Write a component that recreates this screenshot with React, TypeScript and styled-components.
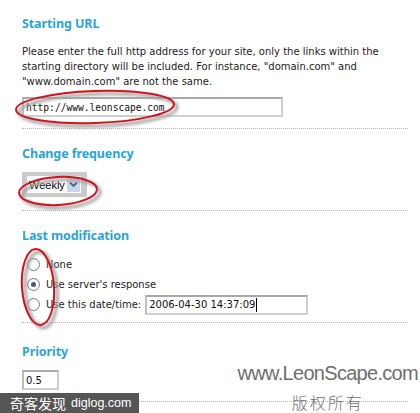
import styled, { createGlobalStyle } from "styled-components";

const Global = createGlobalStyle`
  html, body {
    margin: 0;
    padding: 0;
    background: #fff;
  }
  body {
    font-family: "DejaVu Sans", Verdana, sans-serif;
    color: #222;
  }
`;

const Page = styled.div`
  position: relative;
  width: 420px;
  height: 413px;
  overflow: hidden;
  padding-left: 22px;
  box-sizing: border-box;
`;

const Section = styled.div<{ $top: number; $bottom: number }>`
  width: 386px;
  padding-top: ${(p) => p.$top}px;
  padding-bottom: ${(p) => p.$bottom}px;
  border-bottom: 1px dotted #b5b5b5;
`;

const Heading = styled.div`
  font-family: "Noto Sans", Tahoma, sans-serif;
  font-weight: 700;
  font-size: 12.5px;
  line-height: 20px;
  color: #2ba4d6;
  letter-spacing: -0.1px;
`;

const Para = styled.p`
  margin: 10px 0 0;
  font-size: 10px;
  line-height: 15px;
`;

const TextBox = styled.div<{ $w: number; $mono?: boolean }>`
  width: ${(p) => p.$w}px;
  height: 20px;
  box-sizing: border-box;
  border: 2px solid #cfcfcf;
  border-top-color: #a9a9a9;
  border-left-color: #bdbdbd;
  padding: 0 2px;
  display: flex;
  align-items: center;
  font-family: ${(p) =>
    p.$mono ? `"DejaVu Sans Mono", monospace` : `"DejaVu Sans", sans-serif`};
  font-size: ${(p) => (p.$mono ? 9.6 : 10)}px;
  color: #111;
  background: #fff;
`;

const Caret = styled.span`
  display: inline-block;
  width: 1px;
  height: 14px;
  background: #000;
  margin-left: 1px;
`;

const SelectWrap = styled.div`
  margin-top: 8px;
  width: 65px;
  height: 25px;
  box-sizing: border-box;
  background: #cbcbcb;
  padding: 4px 6px 4px 5px;
  display: flex;
  align-items: stretch;
`;

const SelectBox = styled.div`
  flex: 1;
  background: #fff;
  display: flex;
  align-items: center;
  justify-content: space-between;
  padding: 1px 1px 1px 2px;
  font-family: "Liberation Sans", Arial, sans-serif;
  font-size: 11px;
  color: #000;
`;

const ArrowBtn = styled.div`
  width: 13px;
  height: 15px;
  background: #c9d5ec;
  display: flex;
  align-items: center;
  justify-content: center;
`;

const RadioList = styled.div`
  margin-top: 8px;
  padding-left: 5px;
  display: flex;
  flex-direction: column;
`;

const RadioRow = styled.div<{ $h: number }>`
  height: ${(p) => p.$h}px;
  display: flex;
  align-items: center;
  gap: 6px;
  font-size: 10px;
`;

const Radio = styled.span<{ $on?: boolean }>`
  width: 11px;
  height: 11px;
  border-radius: 50%;
  border: 1px solid #6f7f95;
  background: radial-gradient(circle at 60% 60%, #fff 40%, #e2e2e2 100%);
  display: flex;
  align-items: center;
  justify-content: center;
  &::after {
    content: "";
    width: 5px;
    height: 5px;
    border-radius: 50%;
    background: ${(p) => (p.$on ? "#4a5a6e" : "transparent")};
  }
`;

const Label = styled.span`
  display: flex;
  align-items: center;
  gap: 4px;
`;

const Field = styled.div`
  margin-top: 8px;
`;

const Overlay = styled.svg`
  position: absolute;
  left: 0;
  top: 0;
  pointer-events: none;
`;

const Stamp = styled.div`
  position: absolute;
  left: 0;
  bottom: 0;
  width: 139px;
  height: 20px;
  background: #555;
  color: #fff;
  font-family: "Noto Sans CJK SC", sans-serif;
  font-size: 14px;
  display: flex;
  align-items: center;
  gap: 5px;
  padding-left: 10px;
  box-sizing: border-box;
`;

const StampLatin = styled.span`
  font-family: "Liberation Sans", Arial, sans-serif;
  font-size: 12.5px;
`;

const Mark = styled.div`
  position: absolute;
  right: 2px;
  top: 361px;
  display: flex;
  flex-direction: column;
  align-items: center;
  color: #6e6e6e;
`;

const MarkSite = styled.div`
  font-family: "Liberation Sans", Arial, sans-serif;
  font-size: 20px;
  line-height: 24px;
  letter-spacing: -0.7px;
`;

const MarkCopy = styled.div`
  font-family: "Noto Sans CJK SC", sans-serif;
  font-weight: 300;
  font-size: 16px;
  line-height: 22px;
  letter-spacing: 2px;
  margin-top: 6px;
`;

const rings = [
  { cx: 95, cy: 107, rx: 79, ry: 16, rot: -2 },
  { cx: 58, cy: 191, rx: 39, ry: 14, rot: -3 },
  { cx: 38, cy: 287, rx: 16, ry: 38, rot: -4 },
];

export default function App() {
  return (
    <>
      <Global />
      <Page>
        <Section $top={14} $bottom={11}>
          <Heading>Starting URL</Heading>
          <Para>
            Please enter the full http address for your site, only the links within the
            <br />
            starting directory will be included. For instance, "domain.com" and
            <br />
            "www.domain.com" are not the same.
          </Para>
          <Field>
            <TextBox $w={261} $mono>
              http://www.leonscape.com
            </TextBox>
          </Field>
        </Section>

        <Section $top={15} $bottom={13}>
          <Heading>Change frequency</Heading>
          <SelectWrap>
            <SelectBox>
              Weekly
              <ArrowBtn>
                <svg width="9" height="7" viewBox="0 0 9 7">
                  <path d="M1 1.5 L4.5 5 L8 1.5" fill="none" stroke="#4d6185" strokeWidth="1.8" />
                </svg>
              </ArrowBtn>
            </SelectBox>
          </SelectWrap>
        </Section>

        <Section $top={15} $bottom={7}>
          <Heading>Last modification</Heading>
          <RadioList>
            <RadioRow $h={20}>
              <Radio />
              <Label>None</Label>
            </RadioRow>
            <RadioRow $h={20}>
              <Radio $on />
              <Label>Use server's response</Label>
            </RadioRow>
            <RadioRow $h={21}>
              <Radio />
              <Label>
                Use this date/time:
                <TextBox $w={163}>
                  2006-04-30 14:37:09
                  <Caret />
                </TextBox>
              </Label>
            </RadioRow>
          </RadioList>
        </Section>

        <Section $top={19} $bottom={11}>
          <Heading>Priority</Heading>
          <Field>
            <TextBox $w={37}>0.5</TextBox>
          </Field>
        </Section>

        <Overlay width="420" height="413" viewBox="0 0 420 413">
          <defs>
            <filter id="blur" x="-20%" y="-50%" width="140%" height="200%">
              <feGaussianBlur stdDeviation="1.5" />
            </filter>
          </defs>
          {rings.map((r, i) => (
            <g key={i} transform={`rotate(${r.rot} ${r.cx} ${r.cy})`}>
              <ellipse
                cx={r.cx + 3}
                cy={r.cy + 3}
                rx={r.rx}
                ry={r.ry}
                fill="none"
                stroke="#a0a0a0"
                strokeWidth="3"
                filter="url(#blur)"
              />
              <ellipse cx={r.cx} cy={r.cy} rx={r.rx} ry={r.ry} fill="none" stroke="#d0131c" strokeWidth="2" />
            </g>
          ))}
        </Overlay>

        <Mark>
          <MarkSite>www.LeonScape.com</MarkSite>
          <MarkCopy>版权所有</MarkCopy>
        </Mark>

        <Stamp>
          奇客发现
          <StampLatin>diglog.com</StampLatin>
        </Stamp>
      </Page>
    </>
  );
}
